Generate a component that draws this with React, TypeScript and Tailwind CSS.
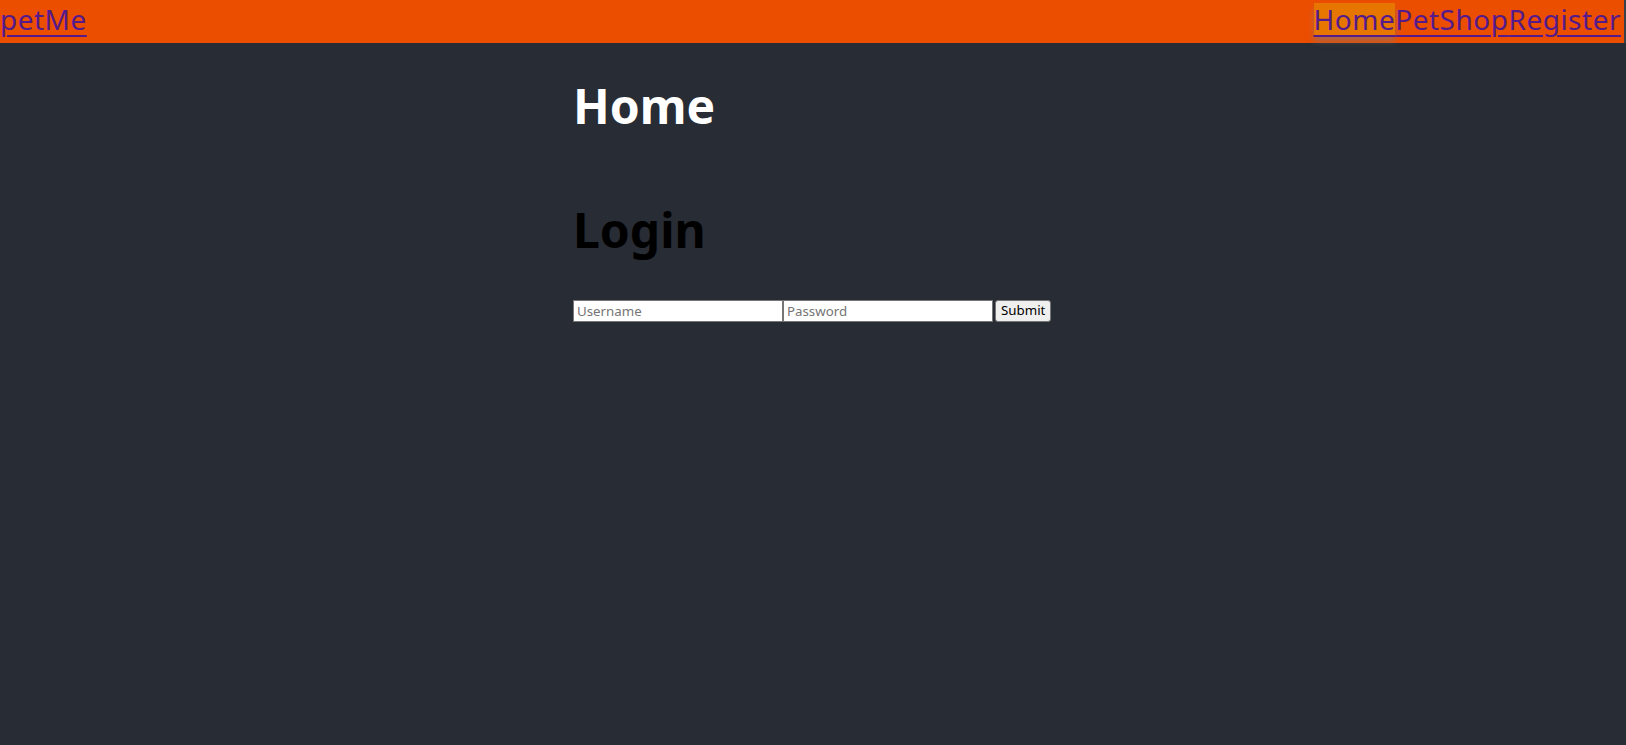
import { useState } from "react";

export default function App() {
  const [username, setUsername] = useState("");
  const [password, setPassword] = useState("");

  return (
    <div className="min-h-[745px] bg-[#282c34] font-['Noto_Sans',sans-serif]">
      {/* barra superior */}
      <nav className="flex h-[43px] items-start justify-between bg-[#ec4e00] pr-[3px] border-r-2 border-[#3a3f4a]">
        <a href="#" className="mt-[3px] text-[28px] leading-[32px] tracking-[0.5px] text-[#551a8b] underline decoration-2 underline-offset-[5px]">
          petMe
        </a>
        <div className="mt-[3px] flex">
          <a href="#" className="bg-[#e67600] text-[28px] leading-[32px] tracking-[0.5px] text-[#551a8b] underline decoration-2 underline-offset-[5px] shadow-[0_6px_6px_rgba(120,120,120,0.6)]">
            Home
          </a>
          <a href="#" className="text-[28px] leading-[32px] tracking-[0.5px] text-[#551a8b] underline decoration-2 underline-offset-[5px]">
            PetShop
          </a>
          <a href="#" className="text-[28px] leading-[32px] tracking-[0.5px] text-[#551a8b] underline decoration-2 underline-offset-[5px]">
            Register
          </a>
        </div>
      </nav>

      <main className="mx-auto w-[480px]">
        <h1 className="mt-[39px] text-[48px] leading-[48px] font-bold text-white">Home</h1>
        <h2 className="mt-[76px] text-[48px] leading-[48px] font-bold text-black">Login</h2>

        <form
          className="mt-[46px] flex"
          onSubmit={(e) => e.preventDefault()}
        >
          <input
            placeholder="Username"
            value={username}
            onChange={(e) => setUsername(e.target.value)}
            className="h-[22px] w-[210px] border border-[#767676] bg-white px-[3px] text-[13.3px] text-black placeholder:text-[#757575]"
          />
          <input
            type="password"
            placeholder="Password"
            value={password}
            onChange={(e) => setPassword(e.target.value)}
            className="h-[22px] w-[210px] border border-[#767676] bg-white px-[3px] text-[13.3px] text-black placeholder:text-[#757575]"
          />
          <button
            type="submit"
            className="ml-[2px] h-[22px] rounded-[3px] border border-[#767676] bg-[#efefef] px-[5px] text-[13.3px] text-black"
          >
            Submit
          </button>
        </form>
      </main>
    </div>
  );
}
